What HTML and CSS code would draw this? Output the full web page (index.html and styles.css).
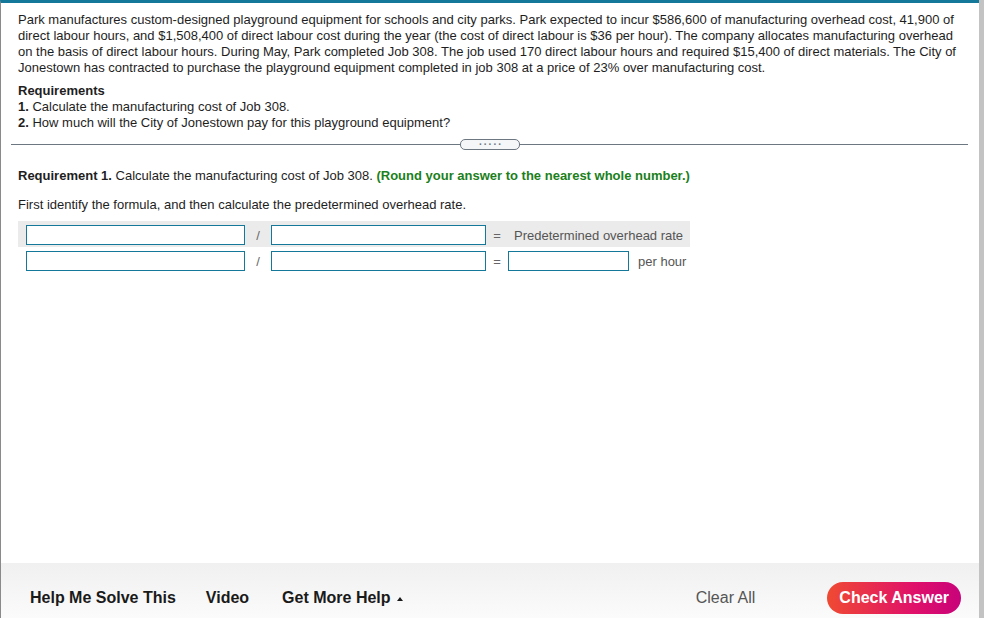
FILE: index.html
```html
<!DOCTYPE html>
<html lang="en">
<head>
  <meta charset="UTF-8">
  <title>Job 308 - Manufacturing cost</title>
  <link rel="stylesheet" href="styles.css">
</head>
<body>
  <div class="window">
    <div class="frame">
      <div class="content">
        <p class="problem">Park manufactures custom-designed playground equipment for schools and city parks. Park expected to incur $586,600 of manufacturing overhead cost, 41,900 of direct labour hours, and $1,508,400 of direct labour cost during the year (the cost of direct labour is $36 per hour). The company allocates manufacturing overhead on the basis of direct labour hours. During May, Park completed Job 308. The job used 170 direct labour hours and required $15,400 of direct materials. The City of Jonestown has contracted to purchase the playground equipment completed in job 308 at a price of 23% over manufacturing cost.</p>

        <div class="requirements">
          <h2>Requirements</h2>
          <p><b>1.</b> Calculate the manufacturing cost of Job 308.</p>
          <p><b>2.</b> How much will the City of Jonestown pay for this playground equipment?</p>
        </div>

        <div class="divider">
          <span class="handle">.....</span>
        </div>

        <p class="question"><b>Requirement 1.</b> Calculate the manufacturing cost of Job 308. <span class="hint">(Round your answer to the nearest whole number.)</span></p>
        <p class="step">First identify the formula, and then calculate the predetermined overhead rate.</p>

        <table class="formula">
          <tr class="formula-head">
            <td class="cell-first"><input type="text" class="field field-wide"></td>
            <td class="op">/</td>
            <td><input type="text" class="field field-mid"></td>
            <td class="op">=</td>
            <td class="label">Predetermined overhead rate</td>
          </tr>
          <tr>
            <td class="cell-first"><input type="text" class="field field-wide"></td>
            <td class="op">/</td>
            <td><input type="text" class="field field-mid"></td>
            <td class="op">=</td>
            <td class="result"><input type="text" class="field field-small"><span class="unit">per hour</span></td>
          </tr>
        </table>
      </div>

      <div class="footer">
        <a href="#" class="link">Help Me Solve This</a>
        <a href="#" class="link">Video</a>
        <a href="#" class="link">Get More Help <span class="caret"></span></a>
        <a href="#" class="clear">Clear All</a>
        <button type="button" class="btn-check">Check Answer</button>
      </div>
    </div>
    <div class="scrollbar"></div>
  </div>
</body>
</html>
```

FILE: styles.css
```css
:root {
  --teal: #14789a;
  --text: #1e1e1e;
  --muted: #555555;
  --green: #1b7f1b;
  --line: #6d7781;
  --row: #ebebeb;
}

* {
  margin: 0;
  padding: 0;
  box-sizing: border-box;
}

body {
  font-family: 'Liberation Sans', Arial, sans-serif;
  font-size: 13px;
  color: var(--text);
  background: #ffffff;
}

.window {
  display: flex;
  width: 985px;
  height: 618px;
  padding-right: 1px;
}

.frame {
  flex: 1;
  display: flex;
  flex-direction: column;
  border-top: 3px solid var(--teal);
  border-left: 1px solid #8a8a8a;
}

.scrollbar {
  width: 5px;
  background: #c3c3c3;
}

.content {
  flex: 1;
  padding: 9px 16px 0 17px;
}

.problem {
  line-height: 16px;
}

.requirements {
  margin-top: 7px;
  line-height: 16px;
}

.requirements h2 {
  font-size: 13px;
  font-weight: bold;
}

/* разделитель с ручкой */
.divider {
  position: relative;
  margin: 13px -5px 0 -7px;
  border-top: 1px solid var(--line);
  height: 1px;
}

.handle {
  position: absolute;
  left: 449px;
  top: -6px;
  width: 60px;
  height: 11px;
  border: 1px solid var(--line);
  border-radius: 5px;
  background: #f4f6f8;
  color: #6d7781;
  font-size: 10px;
  font-weight: bold;
  line-height: 3px;
  letter-spacing: 2px;
  text-indent: 2px;
  text-align: center;
}

.question {
  margin-top: 23px;
  line-height: 16px;
}

.hint {
  color: var(--green);
  font-weight: bold;
}

.step {
  margin-top: 13px;
  line-height: 16px;
}

.formula {
  margin-top: 8px;
  border-collapse: collapse;
}

.formula td {
  height: 26px;
  padding: 2px 0 0;
  vertical-align: middle;
}

.formula-head {
  background: var(--row);
}

.formula .cell-first {
  padding-left: 8px;
}

.field {
  display: block;
  height: 20px;
  border: 1px solid var(--teal);
  border-radius: 0;
  background: #ffffff;
  font-family: inherit;
  font-size: 13px;
  padding: 0 3px;
}

.field-wide {
  width: 219px;
}

.field-mid {
  width: 215px;
}

.field-small {
  width: 121px;
}

.formula .op {
  width: 22px;
  text-align: center;
  color: #666666;
}

.formula td.op:nth-child(2) {
  width: 26px;
}

.formula .label {
  padding: 2px 7px 0 6px;
  color: var(--muted);
}

.result {
  display: flex;
  align-items: center;
  gap: 9px;
}

.unit {
  color: var(--muted);
}

/* нижняя панель */
.footer {
  height: 55px;
  display: flex;
  align-items: center;
  padding: 20px 18px 5px 29px;
  background: linear-gradient(#f0f0f0, #fbfbfb);
}

.link {
  font-size: 16px;
  font-weight: bold;
  color: #1a1a1a;
  text-decoration: none;
  margin-right: 30px;
  display: flex;
  align-items: center;
}

.link:nth-child(2) {
  margin-right: 33px;
}

.caret {
  display: inline-block;
  margin-left: 6px;
  margin-top: 2px;
  border-left: 3.5px solid transparent;
  border-right: 3.5px solid transparent;
  border-bottom: 4px solid #1a1a1a;
}

.clear {
  margin-left: auto;
  margin-right: 72px;
  font-size: 16px;
  color: var(--muted);
  text-decoration: none;
}

.btn-check {
  height: 32px;
  padding: 0 12px;
  border: none;
  border-radius: 16px;
  background: linear-gradient(90deg, #ef4a32, #e0106a 65%, #c8037a);
  color: #ffffff;
  font-family: inherit;
  font-size: 16px;
  font-weight: bold;
  cursor: pointer;
}
```
